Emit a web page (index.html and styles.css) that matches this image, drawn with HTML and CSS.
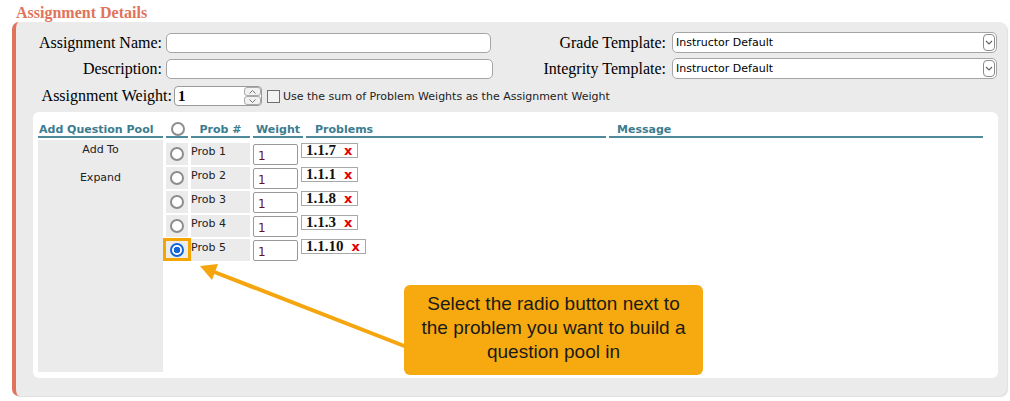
FILE: index.html
```html
<!DOCTYPE html>
<html>
<head>
<meta charset="utf-8">
<title>Assignment Details</title>
<link rel="stylesheet" href="styles.css">
</head>
<body>
<div class="page">
  <div class="title">Assignment Details</div>
  <div class="panel">
    <div class="frow">
      <div class="lbl">Assignment Name:</div>
      <div class="field w325"></div>
      <div class="rlbl">Grade Template:</div>
      <div class="sel"><span>Instructor Default</span><span class="dd"><svg width="10" height="15" viewBox="0 0 10 15"><path d="M2 6 L5 9 L8 6" fill="none" stroke="#666" stroke-width="1.2"/></svg></span></div>
    </div>
    <div class="frow">
      <div class="lbl">Description:</div>
      <div class="field w327"></div>
      <div class="rlbl">Integrity Template:</div>
      <div class="sel"><span>Instructor Default</span><span class="dd"><svg width="10" height="15" viewBox="0 0 10 15"><path d="M2 6 L5 9 L8 6" fill="none" stroke="#666" stroke-width="1.2"/></svg></span></div>
    </div>
    <div class="wrow">
      <div class="wlbl">Assignment Weight:</div>
      <div class="num">
        <span class="numv">1</span>
        <span class="spin">
          <span class="sb"><svg width="9" height="6" viewBox="0 0 9 6"><path d="M1.5 4.5 L4.5 1.5 L7.5 4.5" fill="none" stroke="#777" stroke-width="1"/></svg></span>
          <span class="sb"><svg width="9" height="6" viewBox="0 0 9 6"><path d="M1.5 1.5 L4.5 4.5 L7.5 1.5" fill="none" stroke="#777" stroke-width="1"/></svg></span>
        </span>
      </div>
      <span class="cb"></span>
      <span class="cbt">Use the sum of Problem Weights as the Assignment Weight</span>
    </div>
    <div class="inner">
      <div class="grid">
        <div class="h ha">Add Question Pool</div>
        <div class="h hb"><span class="radio"></span></div>
        <div class="h hc">Prob #</div>
        <div class="h hd">Weight</div>
        <div class="h he">Problems</div>
        <div class="h hf">Message</div>

        <div class="leftcol">
          <div class="lnk">Add To</div>
          <div class="lnk">Expand</div>
        </div>

        <div class="rc"><span class="radio"></span></div>
        <div class="pc">Prob 1</div>
        <div class="wc"><div class="win">1</div></div>
        <div class="prc"><span class="pbox"><span class="pn">1.1.7</span><span class="px">x</span></span></div>
        <div class="mc"></div>

        <div class="rc"><span class="radio"></span></div>
        <div class="pc">Prob 2</div>
        <div class="wc"><div class="win">1</div></div>
        <div class="prc"><span class="pbox"><span class="pn">1.1.1</span><span class="px">x</span></span></div>
        <div class="mc"></div>

        <div class="rc"><span class="radio"></span></div>
        <div class="pc">Prob 3</div>
        <div class="wc"><div class="win">1</div></div>
        <div class="prc"><span class="pbox"><span class="pn">1.1.8</span><span class="px">x</span></span></div>
        <div class="mc"></div>

        <div class="rc"><span class="radio"></span></div>
        <div class="pc">Prob 4</div>
        <div class="wc"><div class="win">1</div></div>
        <div class="prc"><span class="pbox"><span class="pn">1.1.3</span><span class="px">x</span></span></div>
        <div class="mc"></div>

        <div class="rc hl"><span class="radio on"></span></div>
        <div class="pc">Prob 5</div>
        <div class="wc"><div class="win">1</div></div>
        <div class="prc"><span class="pbox"><span class="pn">1.1.10</span><span class="px">x</span></span></div>
        <div class="mc"></div>
      </div>
    </div>
  </div>

  <svg class="arrow" width="1010" height="401" viewBox="0 0 1010 401">
    <line x1="412" y1="349" x2="213" y2="271.5" stroke="#f5a50d" stroke-width="4"/>
    <polygon points="200,266 218,264 212,280" fill="#f5a50d"/>
  </svg>
  <div class="callout">Select the radio button next to<br>the problem you want to build a<br>question pool in</div>
</div>
</body>
</html>
```
FILE: styles.css
```css
* { box-sizing: border-box; }
html, body { margin: 0; padding: 0; background: #fff; }
body {
  width: 1010px;
  height: 401px;
  overflow: hidden;
  font-family: "DejaVu Sans", sans-serif;
  font-size: 11px;
  color: #222;
}
.page { position: relative; width: 1010px; height: 401px; }

.title {
  height: 22px;
  padding: 3px 0 0 16px;
  font-family: "Liberation Serif", serif;
  font-weight: bold;
  font-size: 16px;
  line-height: 19px;
  color: #e0745a;
}

.panel {
  margin-left: 12px;
  width: 995px;
  height: 374px;
  background: #ebebeb;
  border-left: 4px solid #e0735a;
  border-radius: 7px 8px 8px 7px;
  padding: 10px 10px 18px 0;
  box-shadow: 1px 1px 1px #dedede;
}

.frow { display: flex; align-items: center; height: 21px; }
.frow + .frow { margin-top: 5px; }
.lbl {
  width: 146px;
  margin-right: 4px;
  text-align: right;
  font-family: "Liberation Serif", serif;
  font-size: 16px;
  color: #000;
  white-space: nowrap;
}
.field {
  height: 20px;
  background: #fff;
  border: 1px solid #a5a5a5;
  border-radius: 5px;
}
.w325 { width: 325px; }
.w327 { width: 327px; }
.rlbl {
  flex: 1;
  text-align: right;
  padding-right: 6px;
  font-family: "Liberation Serif", serif;
  font-size: 16px;
  color: #000;
  white-space: nowrap;
}
.sel {
  width: 325px;
  height: 21px;
  display: flex;
  align-items: center;
  justify-content: space-between;
  background: #fff;
  border: 1px solid #a5a5a5;
  border-radius: 5px;
  padding: 0 1px 0 3px;
  font-size: 11px;
  color: #000;
}
.dd {
  width: 12px;
  height: 17px;
  border: 1px solid #8a8a8a;
  border-radius: 4px;
  display: flex;
  align-items: center;
  justify-content: center;
}

.wrow { display: flex; align-items: center; height: 20px; margin-top: 7px; }
.wlbl {
  width: 156px;
  margin-right: 2px;
  text-align: right;
  font-family: "Liberation Serif", serif;
  font-size: 16px;
  color: #000;
  white-space: nowrap;
}
.num {
  width: 88px;
  height: 20px;
  display: flex;
  align-items: center;
  justify-content: space-between;
  background: #fff;
  border: 1px solid #9a9a9a;
  border-radius: 4px;
  padding: 0 0 0 3px;
}
.numv {
  font-family: "Liberation Serif", serif;
  font-weight: bold;
  font-size: 15px;
  color: #000;
}
.spin { display: flex; flex-direction: column; width: 17px; height: 18px; }
.sb {
  flex: 1;
  border: 1px solid #a9a9a9;
  border-radius: 3px;
  background: #f1f1f1;
  display: flex;
  align-items: center;
  justify-content: center;
}
.cb {
  width: 13px;
  height: 13px;
  border: 1px solid #707070;
  background: #f3f3f3;
  margin-left: 5px;
}
.cbt { margin-left: 3px; font-size: 11px; color: #222; white-space: nowrap; }

.inner {
  margin: 6px 0 0 17px;
  width: 965px;
  height: 266px;
  background: #fff;
  border-radius: 6px;
  padding: 8px 0 0 5px;
}
.grid {
  display: grid;
  grid-template-columns: 125px 22px 59px 50px 300px 374px;
  grid-template-rows: 18px repeat(5, 24px) 1fr;
  column-gap: 3px;
  height: 252px;
}
.h {
  border-bottom: 2px solid #4f8a9a;
  color: #3b7c8f;
  font-weight: bold;
  font-size: 11px;
  padding-top: 3px;
  line-height: 13px;
  white-space: nowrap;
}
.ha { padding-left: 1px; }
.hb { display: flex; justify-content: center; align-items: center; padding-top: 1px; padding-left: 2px; }
.hc, .hd { text-align: center; }
.he { padding-left: 9px; }
.hf { padding-left: 8px; }

.leftcol {
  grid-column: 1;
  grid-row: 2 / -1;
  margin-top: 2px;
  background: #ebebeb;
  padding-top: 3px;
  text-align: center;
}
.lnk { height: 28px; line-height: 14px; color: #222; }

.radio {
  display: block;
  width: 14px;
  height: 14px;
  border: 2px solid #8d8d8d;
  border-radius: 50%;
  background: #fff;
}
.radio.on {
  border-color: #1466d8;
  background: radial-gradient(circle, #1466d8 0 3px, #fff 3.6px);
}

.rc {
  grid-column: 2;
  margin-top: 5px;
  height: 22px;
  background: #ebebeb;
  display: flex;
  align-items: center;
  justify-content: center;
}
.pc {
  margin-top: 5px;
  height: 22px;
  background: #ebebeb;
  padding-top: 2px;
  line-height: 14px;
  color: #222;
  white-space: nowrap;
}
.wc { margin-top: 6px; }
.win {
  width: 45px;
  height: 21px;
  border: 1px solid #999;
  border-radius: 2px;
  padding: 4px 0 0 4px;
  font-size: 12px;
  line-height: 14px;
  color: #6e0f0f;
}
.prc { margin-top: 5px; }
.pbox {
  display: inline-flex;
  align-items: center;
  margin-left: -5px;
  height: 15px;
  border: 1px solid #a8a8a8;
  padding: 0 5px 0 4px;
  background: #fff;
}
.pn {
  font-family: "Liberation Serif", serif;
  font-weight: bold;
  font-size: 15px;
  line-height: 13px;
  color: #111;
}
.px {
  margin-left: 8px;
  color: #e40000;
  font-weight: bold;
  font-size: 13px;
  line-height: 13px;
}

.hl { position: relative; }
.hl::after {
  content: "";
  position: absolute;
  left: -3px;
  right: -3px;
  top: -1px;
  bottom: 0;
  border: 3px solid #f5a500;
}

.arrow { position: absolute; left: 0; top: 0; pointer-events: none; }
.callout {
  position: absolute;
  left: 404px;
  top: 285px;
  width: 299px;
  height: 90px;
  background: #f6aa10;
  border-radius: 6px;
  padding-top: 7px;
  text-align: center;
  font-family: "Liberation Sans", Arial, sans-serif;
  font-size: 19px;
  line-height: 24px;
  color: #1a1a1a;
}
```
